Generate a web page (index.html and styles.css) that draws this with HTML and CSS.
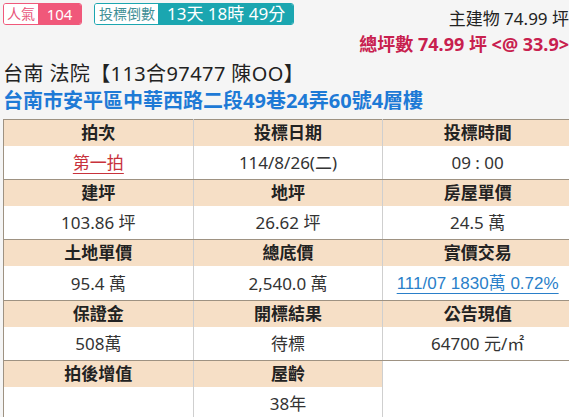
FILE: index.html
```html
<!DOCTYPE html>
<html lang="zh-Hant">
<head>
<meta charset="utf-8">
<link rel="stylesheet" href="styles.css">
</head>
<body>
<div class="page">
  <div class="top">
    <div class="badges">
      <span class="badge pink"><span class="lbl">人氣</span><span class="val">104</span></span>
      <span class="badge teal"><span class="lbl">投標倒數</span><span class="val">13天 18時 49分</span></span>
    </div>
    <div class="area">
      <div class="main">主建物 74.99 坪</div>
      <div class="total">總坪數 74.99 坪 &lt;@ 33.9&gt;</div>
    </div>
  </div>
  <div class="title">台南 法院【113合97477 陳OO】</div>
  <div class="addr">台南市安平區中華西路二段49巷24弄60號4層樓</div>
  <table class="info">
    <tr class="h"><th>拍次</th><th>投標日期</th><th>投標時間</th></tr>
    <tr class="d"><td><a class="round">第一拍</a></td><td>114/8/26(二)</td><td>09 : 00</td></tr>
    <tr class="h"><th>建坪</th><th>地坪</th><th>房屋單價</th></tr>
    <tr class="d"><td>103.86 坪</td><td>26.62 坪</td><td>24.5 萬</td></tr>
    <tr class="h"><th>土地單價</th><th>總底價</th><th>實價交易</th></tr>
    <tr class="d"><td>95.4 萬</td><td>2,540.0 萬</td><td><a class="link">111/07 1830萬 0.72%</a></td></tr>
    <tr class="h"><th>保證金</th><th>開標結果</th><th>公告現值</th></tr>
    <tr class="d"><td>508萬</td><td>待標</td><td>64700 元/㎡</td></tr>
    <tr class="h"><th>拍後增值</th><th>屋齡</th><td class="empty" rowspan="2"></td></tr>
    <tr class="d"><td></td><td>38年</td></tr>
  </table>
</div>
</body>
</html>
```
FILE: styles.css
```css
html, body {
  margin: 0;
  padding: 0;
  background: #f5f5f5;
  overflow: hidden;
}
body {
  width: 569px;
  height: 417px;
  font-family: "Noto Sans", "Noto Sans CJK TC", sans-serif;
  color: #222;
}
.page {
  width: 600px;
  padding: 3px 0 0 3px;
}
.top {
  display: flex;
  justify-content: space-between;
  width: 566px;
  height: 57px;
}
.badges {
  display: flex;
  gap: 12px;
  align-items: flex-start;
}
.badge {
  display: flex;
  height: 20px;
  border-radius: 3px;
  overflow: hidden;
  line-height: 20px;
  white-space: nowrap;
}
.badge .lbl {
  background: #fff;
  font-size: 14px;
}
.badge .val {
  color: #fff;
}
.pink {
  border: 1px solid #f0587a;
}
.pink .lbl {
  color: #e8557a;
  padding: 0 3px 0 3px;
}
.pink .val {
  background: #f0587a;
  font-size: 15px;
  width: 43px;
  text-align: center;
}
.teal {
  border: 1px solid #1ba6b0;
}
.teal .lbl {
  color: #3f8f96;
  padding: 0 3px 0 4px;
}
.teal .val {
  background: #1ba6b0;
  font-size: 17px;
  padding: 0 8px 0 9px;
}
.area {
  text-align: right;
  white-space: nowrap;
}
.main {
  font-size: 17px;
  line-height: 22px;
  margin-top: 5px;
  color: #222;
}
.total {
  font-size: 18px;
  font-weight: bold;
  line-height: 24px;
  margin-top: 2px;
  color: #c8204e;
}
.title {
  font-size: 20px;
  letter-spacing: 0.4px;
  line-height: 28px;
  color: #222;
}
.addr {
  font-size: 20px;
  font-weight: bold;
  line-height: 26px;
  color: #1e7ad6;
  margin-bottom: 5px;
}
.info {
  border-collapse: collapse;
  width: 570px;
  table-layout: fixed;
  background: #fff;
  border-top: 1px solid #9e9282;
  border-left: 1px solid #9e9282;
  border-right: 1px solid #9e9282;
}
.info th, .info td {
  text-align: center;
  border-left: 1px solid #cfcfcf;
  padding: 0;
  font-size: 17px;
}
.info th:first-child, .info tr.d td:first-child {
  border-left: none;
}
.info tr.h th {
  background: #f6dfc6;
  height: 26px;
  line-height: 26px;
  font-weight: bold;
  color: #222;
}
.info tr.d td {
  height: 33px;
  line-height: 33px;
  color: #333;
  border-bottom: 1px solid #9e9282;
}
.info td.empty {
  background: #fff;
  border-bottom: 1px solid #9e9282;
}
.round {
  color: #c8323c;
  text-decoration: underline;
  text-underline-offset: 4px;
}
.link {
  color: #2a7fc9;
  font-family: "Liberation Sans", "Noto Sans CJK TC", sans-serif;
  font-size: 17px;
  text-decoration: underline;
  text-underline-offset: 4px;
}
```
